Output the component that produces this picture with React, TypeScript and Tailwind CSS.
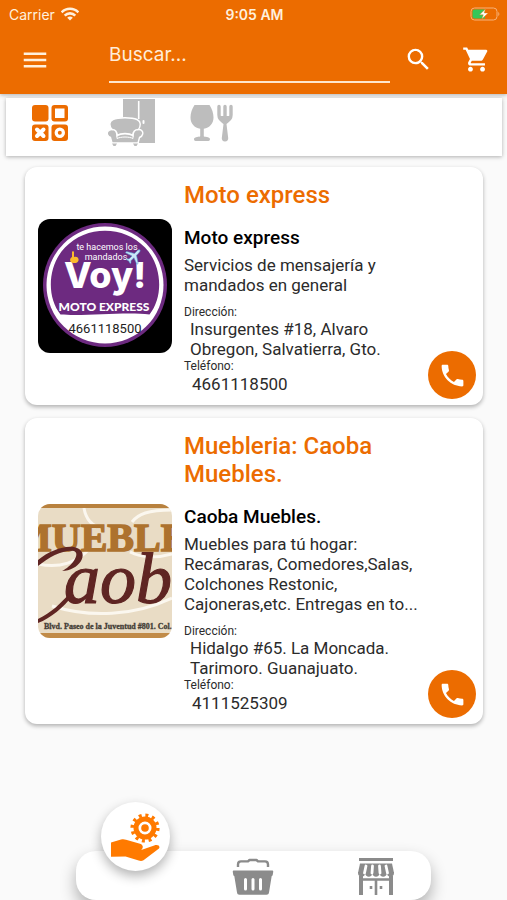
import type { ReactNode } from "react";
import { MdMenu, MdPhone, MdSearch, MdShoppingCart } from "react-icons/md";

type Business = {
  category: string;
  name: string;
  description: string;
  address: string;
  phone: string;
  picture: ReactNode;
};

function WifiIcon() {
  return (
    <svg viewBox="0 0 18 14" className="h-[14px] w-[18px]" fill="none" stroke="currentColor" strokeWidth="2.600" aria-hidden="true">
      <path d="M.6 5.400C5.200 .6 12.800 .6 17.400 5.400" />
      <path d="M3.700 8.600c3-3 7.600-3 10.600 0" />
      <path d="M6.200 10.700c1.700-1.500 3.900-1.500 5.600 0L9 13.600z" fill="currentColor" stroke="none" />
    </svg>
  );
}

function BatteryIcon() {
  return (
    <svg viewBox="0 0 30 14" className="h-[14px] w-[30px]" aria-hidden="true">
      <rect x="1" y="1" width="26" height="12" rx="3.5" fill="none" stroke="#f7b27a" strokeWidth="1" />
      <path d="M28.3 5v4c1.400-.6 1.400-3.400 0-4z" fill="#f7b27a" />
      <path d="M4.500 2.500H15v9H4.500Q2.500 11.500 2.500 9.500v-5Q2.500 2.500 4.500 2.500z" fill="#35c759" />
      <path d="M15.500 2 9.500 7.800h3.800L11.800 12l6.400-6h-4z" fill="#fff" stroke="#ec6c00" strokeWidth=".4" />
    </svg>
  );
}

function AllIcon() {
  return (
    <svg viewBox="0 0 48 48" className="size-12" aria-hidden="true">
      <g fill="#ec6c00">
        <rect x="6" y="7" width="16.500" height="16.500" rx="3" />
        <rect x="25.500" y="7" width="16.500" height="16.500" rx="3" />
        <rect x="6" y="26.500" width="16.500" height="16.500" rx="3" />
        <rect x="25.500" y="26.500" width="16.500" height="16.500" rx="3" />
      </g>
      <rect x="29" y="10.500" width="9.500" height="9.500" fill="#fff" />
      <path d="M11 31.500l6.500 6.500M17.500 31.500l-6.500 6.500" stroke="#fff" strokeWidth="4" strokeLinecap="round" />
      <circle cx="33.800" cy="34.800" r="3.600" fill="none" stroke="#fff" strokeWidth="3.200" />
    </svg>
  );
}

function FurnitureIcon() {
  return (
    <svg viewBox="0 0 48 48" className="size-12" fill="#bdbdbd" aria-hidden="true">
      <path d="M16 1h32v44H32V25H16z" />
      <path d="M31.700 3v18" stroke="#fff" strokeWidth="1.600" />
      <rect x="35.500" y="22" width="2" height="4" rx="1" fill="#fff" />
      <path
        d="M5 31.500c-4 0-5.500 3-4.300 5.500.6 1.300 1.800 2 2.800 2.500l1.500 5.500h26l1.500-5.500c1.500-.6 2.800-1.600 3.200-3.500.6-2.600-1.500-4.700-4.200-4.500 2.500-4 2.500-8-1.500-10-5-2.300-19-2.300-24 0-4 2-4 6-1 10z"
        stroke="#fff"
        strokeWidth="1.400"
      />
      <path d="M5 31.500c3.500 0 5 2.500 5 6 4-2.500 12-2.500 16 0 0-3.500 2-6 5.500-6" fill="none" stroke="#fff" strokeWidth="1.600" />
      <path d="M10 37.500v3c4-2 12-2 16 0v-3" fill="none" stroke="#fff" strokeWidth="1" />
      <path d="M5 45.500h5l-1.500 2.500h-2zM26 45.500h5l-1.500 2.500h-2z" />
    </svg>
  );
}

function FoodIcon() {
  return (
    <svg viewBox="0 0 48 48" className="size-12" fill="#bdbdbd" aria-hidden="true">
      <path d="M6.500 7h15c2.500 4 4 8 4 12.500 0 6-4 10.500-9.700 11.300v7.400c0 .8 6.200.3 6.200 2.800 0 1-.6 2-1.600 2H7.600C6.600 43 6 42 6 41c0-2.500 6.200-2 6.200-2.800v-7.400C6.500 30 2.500 25.500 2.500 19.500 2.500 15 4 11 6.500 7z" />
      <path d="M31 8.500V17c0 4 2.500 5.500 6 5.500s6-1.500 6-5.500V8.500M37 8.500V24" fill="none" stroke="#bdbdbd" strokeWidth="3.400" strokeLinecap="round" />
      <path d="M30 18c1 5 4 7 5.500 8l-1.700 14c-.2 2 1 3.400 3.200 3.400s3.400-1.400 3.200-3.400L38.500 26c1.500-1 4.500-3 5.500-8z" />
    </svg>
  );
}

function ServicesIcon() {
  return (
    <svg viewBox="0 0 50 50" className="size-[50px]" fill="#ff7a00" aria-hidden="true">
      <circle cx="35" cy="16" r="9" fill="none" stroke="#ff7a00" strokeWidth="5" />
      <circle cx="35" cy="16" r="3.800" />
      <circle cx="35" cy="16" r="12.800" fill="none" stroke="#ff7a00" strokeWidth="3.600" strokeDasharray="3 3.700" />
      <path d="M1 30.500 11 27.500c2-.6 3.500-.3 5 .2l14 4c2.600.9 3.500 3 2.200 5l-1 1.300 13-4.500c4-1.300 6.200.8 4.800 3L33.500 48.200c-1.600 1-3 1-4.800.3L15.500 44.500 1 44.700z" />
    </svg>
  );
}

function BasketIcon() {
  return (
    <svg viewBox="0 0 42 38" className="h-[38px] w-[42px]" fill="#8b8b8b" aria-hidden="true">
      <path d="M6 10V7.500C6 5 7.200 4.400 9 4.400h7l1.500-1.400h7L26 4.400h7c1.800 0 3 .6 3 3.100V10" fill="none" stroke="#8b8b8b" strokeWidth="2.400" strokeLinejoin="round" />
      <path d="M2 13.500h38c1 0 1.400.6 1.200 1.500l-.5 3c-.1.600-.5 1-1 1L37 35.500c-.3 1.500-1 2.200-2.500 2.200h-27C6 37.700 5.300 37 5 35.500L2.300 19c-.5 0-.9-.4-1-1l-.5-3c-.2-.9.200-1.500 1.200-1.500z" />
      <path d="M13.500 22.500v9.500M21 22.500v9.500M28.500 22.500v9.500" stroke="#fff" strokeWidth="3" strokeLinecap="round" />
    </svg>
  );
}

function StoreIcon() {
  return (
    <svg viewBox="0 0 38 38" className="size-[38px]" fill="none" stroke="#8b8b8b" aria-hidden="true">
      <path d="M2 2.500h34" strokeWidth="3" />
      <path d="M3 6.500h32l2 9.500H1z" fill="#8b8b8b" stroke="none" />
      <path d="M1 15h36v1c0 5-7 5-7.200 0 0 5-7.200 5-7.200 0 0 5-7.200 5-7.200 0 0 5-7.200 5-7.200 0C8.200 21 1 21 1 16z" fill="#8b8b8b" stroke="none" />
      <path d="M9 9 7.500 16M15.500 9 15 16M22.500 9 23 16M29 9 30.500 16" stroke="#fff" strokeWidth="2.800" strokeLinecap="round" />
      <path d="M4 19v19M34 19v19" strokeWidth="4" />
      <path d="M4 22.500h30M19 22v16" strokeWidth="2.600" />
      <path d="M14 29v3M24 29v3" strokeWidth="2.600" />
    </svg>
  );
}

function VoyPicture() {
  return (
    <svg viewBox="0 0 134 134" className="size-[134px] shrink-0 rounded-xl" role="img" aria-label="Voy! Moto express">
      <rect width="134" height="134" fill="#000" />
      <circle cx="67" cy="66" r="62" fill="#6d2a80" />
      <circle cx="67" cy="66" r="58.500" fill="#fff" />
      <path d="M22.500 95.500C8 77 10 46 27 28.500 48 6 86 6 107 28.500c17 17.500 19 48.500 4.500 67-24-3-65 2-89 0z" fill="#6d2a80" />
      <g fill="#fff" textAnchor="middle">
        <text x="69" y="31" fontSize="9" fontFamily="Roboto, sans-serif">te hacemos los</text>
        <text x="68" y="41" fontSize="9" fontFamily="Roboto, sans-serif">mandados</text>
        <text x="67" y="69" fontSize="36" fontWeight="800" fontFamily="Inter, sans-serif">Voy!</text>
        <text x="66" y="92" fontSize="12" fontWeight="900" fontFamily="Lato, sans-serif">MOTO EXPRESS</text>
      </g>
      <text x="67" y="114" fontSize="13" fill="#222" textAnchor="middle" fontFamily="Roboto, sans-serif">4661118500</text>
      <path d="M36 33v5c3-1 5 1 4.500 3.500-.5 3-6 3.500-8 1-1-1.500 0-4 1.500-4.500V33c0-1 2-1 2 0z" fill="#fbb92c" />
      <path d="M102 31c-1.500-.5-2.500.3-3.500 1.500l-2 2-8-2-1 1.200 6.500 3.300-3 3-2-.2-.8.8 2.600 1.400 1.300 2.600.9-.8-.1-2 3-3 3 6.500 1.300-1-1.700-8 2-2c1-1 2-2.300 1.500-3.300z" fill="#cbe6f7" stroke="#4f9bd0" strokeWidth=".6" />
    </svg>
  );
}

function CaobaPicture() {
  return (
    <svg viewBox="0 0 134 134" className="size-[134px] shrink-0 rounded-xl" role="img" aria-label="Muebles Caoba">
      <rect width="134" height="134" fill="#e9dcc5" />
      <g fill="none" stroke="#fbf7ef" strokeWidth="3">
        <path d="M46 4c2 12 8 18 18 20M94 18c6-8 16-12 40-12M0 60c22 5 40-2 52-16M92 48c12 6 28 6 42 2M14 102c38 12 82 10 120-8" />
      </g>
      <rect width="134" height="4" fill="#b8813e" />
      <rect y="129" width="134" height="5" fill="#c18b48" />
      <text x="-24" y="47" fontSize="40" fontWeight="700" fill="#ad722e" stroke="#ad722e" strokeWidth="1.500" fontFamily="'Liberation Serif', serif">MUEBLES</text>
      <path d="M0 56C12 46 30 40 39 44c13 5 2 23-15 23 9-4 19-17 12-20C27 45 12 52 0 62z" fill="#5f2523" />
      <path d="M0 115c13-6 23-16 31-25l4 1C25 104 13 114 0 119z" fill="#5f2523" />
      <text x="26" y="99" fontSize="72" fontStyle="italic" fill="#5f2523" stroke="#5f2523" strokeWidth="1.200" fontFamily="'Liberation Serif', serif">aoba</text>
      <text x="6" y="125" fontSize="8" fontWeight="700" fill="#443d36" stroke="#443d36" strokeWidth=".3" fontFamily="'Liberation Serif', serif">Blvd. Paseo de la Juventud #801. Col.</text>
    </svg>
  );
}

const businesses: Business[] = [
  {
    category: "Moto express",
    name: "Moto express",
    description: "Servicios de mensajería y mandados en general",
    address: "Insurgentes #18, Alvaro Obregon, Salvatierra, Gto.",
    phone: "4661118500",
    picture: <VoyPicture />,
  },
  {
    category: "Muebleria: Caoba Muebles.",
    name: "Caoba Muebles.",
    description: "Muebles para tú hogar: Recámaras, Comedores,Salas, Colchones Restonic, Cajoneras,etc. Entregas en to...",
    address: "Hidalgo #65. La Moncada. Tarimoro. Guanajuato.",
    phone: "4111525309",
    picture: <CaobaPicture />,
  },
];

function BusinessCard({ business }: { business: Business }) {
  return (
    <article className="flex items-center rounded-xl bg-white pr-[7px] pl-[13px] shadow-[0_2px_4px_rgba(0,0,0,0.3)]">
      {business.picture}
      <div className="ml-3 min-w-0 flex-1 pt-[14px] pb-[10px] text-[#2b2b2b]">
        <h2 className="text-[24px] leading-7 font-medium text-[#ec6c00]">{business.category}</h2>
        <h3 className="mt-[17px] text-[19px] leading-6 font-medium text-black">{business.name}</h3>
        <p className="mt-[5px] text-[17px] leading-5">{business.description}</p>
        <dl className="mt-[10px]">
          <dt className="text-[12px] leading-[14px]">Dirección:</dt>
          <dd className="pl-[6px] text-[17px] leading-5">{business.address}</dd>
          <dt className="text-[12px] leading-[14px]">Teléfono:</dt>
          <dd className="pl-2 text-[17px] leading-[22px]">{business.phone}</dd>
        </dl>
      </div>
      <button
        type="button"
        aria-label={`Llamar a ${business.name}`}
        className="mb-[6px] flex size-12 shrink-0 items-center justify-center self-end rounded-full bg-[#ec6c00] text-white"
      >
        <MdPhone size={29} />
      </button>
    </article>
  );
}

export default function App() {
  return (
    <div className="flex min-h-screen flex-col overflow-hidden bg-[#fafafa] font-[Roboto,sans-serif]">
      <header className="bg-[#ec6c00] text-white shadow-[0_1px_4px_rgba(0,0,0,0.3)]">
        <div className="grid h-7 grid-cols-3 items-center pr-[7px] pl-[9px] font-[Inter,sans-serif] text-[14px] text-[#fff0dd]">
          <span className="flex items-center gap-[6px]">
            Carrier
            <WifiIcon />
          </span>
          <span className="text-center font-semibold">9:05 AM</span>
          <span className="justify-self-end">
            <BatteryIcon />
          </span>
        </div>
        <div className="flex h-[66px] items-center pb-[3px]">
          <button type="button" aria-label="Menú" className="flex h-12 w-[70px] items-center justify-center text-[#fff0dd]">
            <MdMenu size={30} />
          </button>
          <input
            type="text"
            aria-label="Buscar"
            placeholder="Buscar..."
            className="ml-[39px] h-[55px] min-w-0 flex-1 self-start border-b-2 border-[#ffe6cc] bg-transparent font-[Inter,sans-serif] text-[19px] outline-none placeholder:text-[#ffedd9]"
          />
          <button type="button" aria-label="Buscar negocios" className="flex h-12 w-14 items-center justify-center">
            <MdSearch size={29} />
          </button>
          <button type="button" aria-label="Carrito" className="flex h-12 w-[61px] items-center justify-center">
            <MdShoppingCart size={29} />
          </button>
        </div>
      </header>

      <div className="mt-1 mr-[5px] ml-[6px] flex h-[58px] items-start gap-px bg-white pl-1 shadow-[0_1px_4px_rgba(0,0,0,0.3)]">
        <button type="button" aria-label="Todos" className="flex w-20 justify-center">
          <AllIcon />
        </button>
        <button type="button" aria-label="Muebles" className="flex w-20 justify-center">
          <FurnitureIcon />
        </button>
        <button type="button" aria-label="Comida" className="flex w-20 justify-center">
          <FoodIcon />
        </button>
      </div>

      <main className="mt-[11px] mr-6 mb-20 ml-[25px] flex flex-col gap-[13px]">
        {businesses.map((business) => (
          <BusinessCard key={business.phone} business={business} />
        ))}
      </main>

      <nav className="mx-auto mt-auto grid h-[49px] w-[70%] grid-cols-3 justify-items-center rounded-[20px] bg-white shadow-[0_8px_16px_rgba(0,0,0,0.3)]">
        <button
          type="button"
          aria-label="Servicios"
          className="-mt-[49px] flex size-[69px] items-center justify-center rounded-full bg-white shadow-[0_5px_12px_rgba(0,0,0,0.3)]"
        >
          <ServicesIcon />
        </button>
        <button type="button" aria-label="Productos" className="flex items-center">
          <BasketIcon />
        </button>
        <button type="button" aria-label="Tiendas" className="flex items-center pl-2">
          <StoreIcon />
        </button>
      </nav>
    </div>
  );
}
